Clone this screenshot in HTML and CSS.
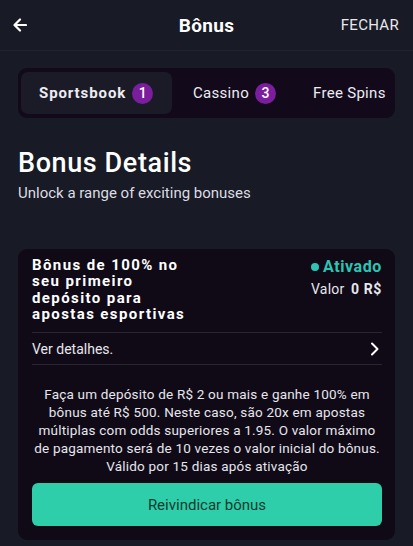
FILE: index.html
```html
<!DOCTYPE html>
<html lang="pt">
<head>
<meta charset="utf-8">
<link rel="stylesheet" href="styles.css">
</head>
<body>
<header class="topbar">
  <svg class="back" width="14" height="14" viewBox="0 0 14 14"><path d="M13 7H2M7 1.5L1.5 7 7 12.5" fill="none" stroke="#fff" stroke-width="2.2" stroke-linecap="round" stroke-linejoin="round"/></svg>
  <h1 class="title">Bônus</h1>
  <span class="close">FECHAR</span>
</header>
<main class="content">
  <nav class="tabs">
    <div class="tab active">Sportsbook <span class="badge">1</span></div>
    <div class="tab">Cassino <span class="badge">3</span></div>
    <div class="tab">Free Spins</div>
  </nav>
  <section class="intro">
    <h2>Bonus Details</h2>
    <p>Unlock a range of exciting bonuses</p>
  </section>
  <article class="card">
    <div class="card-head">
      <h3 class="card-title">Bônus de 100% no seu primeiro depósito para apostas esportivas</h3>
      <div class="status">
        <div class="active-label"><span class="dot"></span>Ativado</div>
        <div class="value">Valor <b>0 R$</b></div>
      </div>
    </div>
    <div class="details-row">
      <span>Ver detalhes.</span>
      <svg width="10" height="14" viewBox="0 0 10 14"><path d="M2 1.5L7.5 7 2 12.5" fill="none" stroke="#fff" stroke-width="2" stroke-linecap="round" stroke-linejoin="round"/></svg>
    </div>
    <p class="desc">Faça um depósito de R$ 2 ou mais e ganhe 100% em bônus até R$ 500. Neste caso, são 20x em apostas múltiplas com odds superiores a 1.95. O valor máximo de pagamento será de 10 vezes o valor inicial do bônus. Válido por 15 dias após ativação</p>
    <button class="claim">Reivindicar bônus</button>
  </article>
</main>
</body>
</html>
```
FILE: styles.css
```css
* { box-sizing: border-box; }
html, body { margin: 0; padding: 0; }
body {
  background: #181a25;
  color: #fff;
  font-family: Roboto, "Noto Sans", sans-serif;
  width: 413px;
  height: 546px;
  overflow: hidden;
}
.topbar {
  height: 51px;
  display: flex;
  align-items: center;
  justify-content: space-between;
  padding: 0 14px 0 13px;
  background: #181a25;
  border-bottom: 1px solid #21232f;
  position: relative;
}
.back { display: block; }
.title {
  position: absolute;
  left: 0; right: 0;
  text-align: center;
  margin: 0;
  font-size: 19px;
  font-weight: 700;
  letter-spacing: 0.3px;
  pointer-events: none;
}
.close {
  font-size: 15px;
  color: #e8e8ee;
  letter-spacing: 0.3px;
}
.content { padding: 17px 18px 0 18px; }
.tabs {
  display: flex;
  align-items: center;
  background: #120a1b;
  border-radius: 9px;
  padding: 4px 3px;
  height: 50px;
}
.tab {
  height: 42px;
  display: flex;
  align-items: center;
  gap: 6px;
  font-size: 15px;
  color: #ececf2;
  letter-spacing: 0.3px;
  padding: 0 0 0 21px;
}
.tab.active {
  width: 151px;
  background: #1a1b26;
  border-radius: 7px;
  padding-left: 18px;
  font-weight: 700;
  letter-spacing: 0.9px;
}
.tab:nth-child(2) { width: 120px; }
.badge {
  width: 21px; height: 21px;
  border-radius: 50%;
  background: #7b1e9e;
  color: #fff;
  font-size: 14px;
  font-weight: 500;
  display: inline-flex;
  align-items: center;
  justify-content: center;
  letter-spacing: 0;
}
.intro { padding: 29px 0 0 0; }
.intro h2 {
  margin: 0;
  font-size: 27px;
  font-weight: 500;
  letter-spacing: 0.6px;
  line-height: 32px;
}
.intro p {
  margin: 5px 0 0 0;
  font-size: 15px;
  color: #dcdde3;
  line-height: 18px;
}
.card {
  margin-top: 47px;
  background: #100a17;
  border-radius: 9px;
  padding: 8px 13px 14px 14px;
}
.card-head {
  display: flex;
  justify-content: space-between;
  align-items: flex-start;
  padding-bottom: 10px;
  border-bottom: 1px solid #2a2732;
}
.card-title {
  margin: 0;
  width: 175px;
  font-size: 15px;
  font-weight: 700;
  letter-spacing: 1.4px;
  line-height: 16.3px;
}
.status { text-align: right; }
.active-label {
  color: #2cc5b3;
  font-size: 16px;
  font-weight: 700;
  letter-spacing: 0.6px;
  display: flex;
  align-items: center;
  justify-content: flex-end;
  gap: 4px;
  line-height: 20px;
}
.dot { width: 8px; height: 8px; border-radius: 50%; background: #2cc5b3; }
.value {
  margin-top: 4px;
  font-size: 14px;
  color: #e6e6ec;
  letter-spacing: 0.2px;
}
.value b { margin-left: 3px; font-weight: 700; letter-spacing: 0.6px; }
.details-row {
  display: flex;
  justify-content: space-between;
  align-items: center;
  height: 32px;
  font-size: 14px;
  color: #e6e6ec;
  border-bottom: 1px solid #2a2732;
  padding-right: 2px;
}
.desc {
  margin: 20px 0 0 0;
  text-align: center;
  font-size: 13.5px;
  line-height: 18px;
  color: #e6e6ec;
  letter-spacing: 0.2px;
}
.claim {
  margin-top: 8px;
  width: 100%;
  height: 43px;
  border: none;
  border-radius: 6px;
  background: #2dcea9;
  color: #0e3b30;
  font-family: Roboto, "Noto Sans", sans-serif;
  font-size: 15px;
}
```
